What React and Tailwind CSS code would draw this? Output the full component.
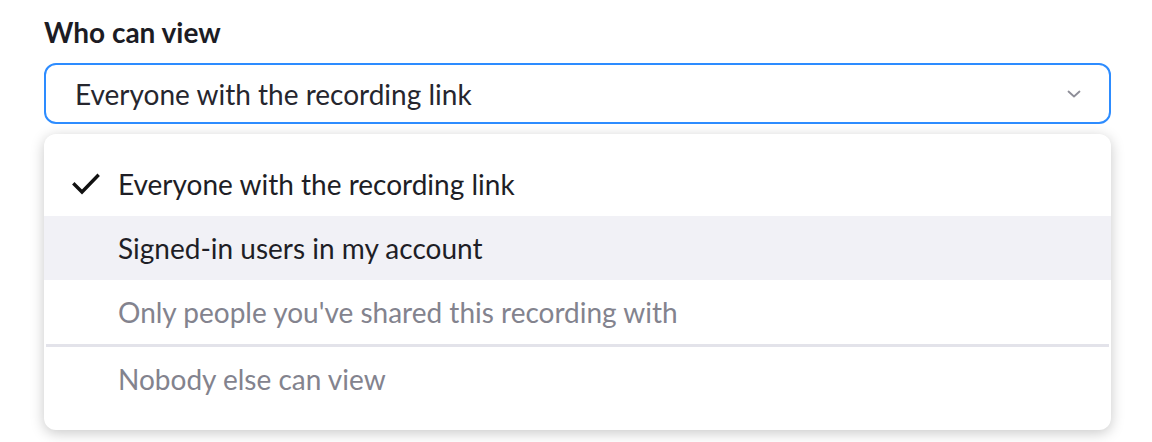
import { useState } from "react";

const options = [
  { label: "Everyone with the recording link", selected: true },
  { label: "Signed-in users in my account", hover: true },
  { label: "Only people you've shared this recording with", muted: true },
  { label: "Nobody else can view", muted: true, divider: true },
];

export default function App() {
  const [value] = useState(options[0].label);

  return (
    <div className="w-[1152px] h-[442px] bg-white pl-[44px] pr-[41px] pt-[15px] font-['Lato','Liberation_Sans',sans-serif]">
      <p className="text-[28px] leading-[34px] font-bold text-[#1c1c24]">Who can view</p>
      <button
        type="button"
        className="mt-[14px] w-full h-[61px] flex items-center justify-between rounded-[12px] border-2 border-[#2d8cff] pl-[29px] pr-[28px] text-left"
      >
        <span className="text-[28px] leading-[34px] text-[#26262e]">{value}</span>
        <svg width="14" height="8" viewBox="0 0 14 8" fill="none">
          <path d="M1.5 1.5 L7 6.5 L12.5 1.5" stroke="#8e8e98" strokeWidth="1.8" strokeLinecap="round" strokeLinejoin="round" />
        </svg>
      </button>
      <div className="mt-[10px] w-full rounded-[12px] bg-white pt-[18px] pb-[19px] shadow-[0_3px_14px_rgba(0,0,0,0.22)] overflow-hidden">
        {options.map((o) => (
          <div key={o.label}>
            {o.divider && <div className="h-[3px] mx-[2px] bg-[#e3e3ea]" />}
            <div
              className={`h-[64px] flex items-center pl-[74px] text-[28px] ${
                o.hover ? "bg-[#f1f1f6]" : ""
              } ${o.muted ? "text-[#83838e]" : "text-[#1e1e26]"}`}
            >
              {o.selected && (
                <svg className="-ml-[46px] mr-[18px]" width="28" height="22" viewBox="0 0 28 22" fill="none">
                  <path d="M2.5 11.5 L10 19 L25.5 3" stroke="#111" strokeWidth="3.4" strokeLinecap="square" />
                </svg>
              )}
              {o.label}
            </div>
          </div>
        ))}
      </div>
    </div>
  );
}
